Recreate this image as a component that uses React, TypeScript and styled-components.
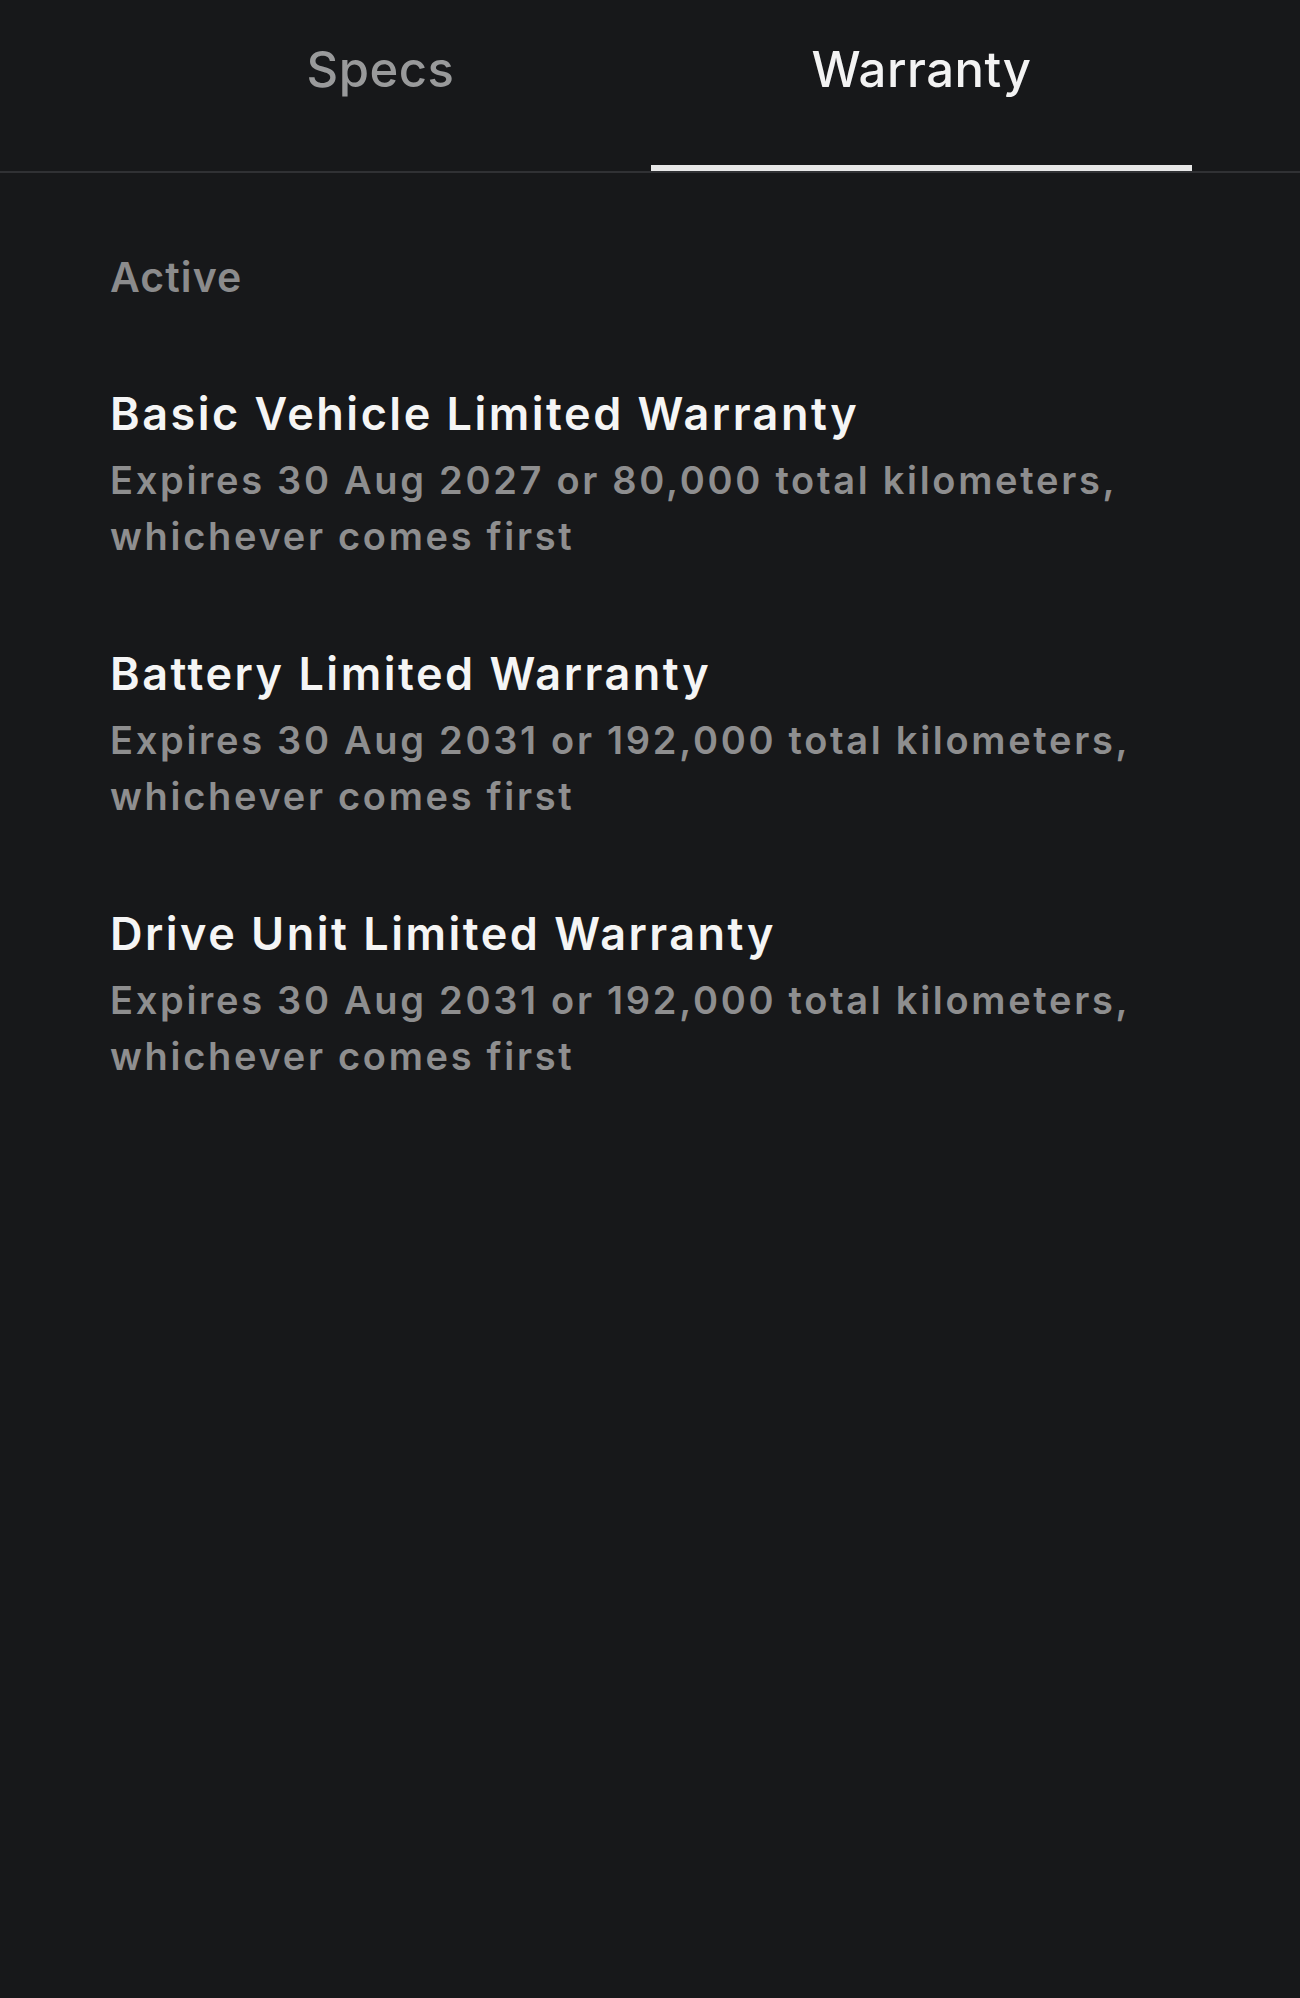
import React, { useState } from 'react';
import styled, { createGlobalStyle } from 'styled-components';

const GlobalStyle = createGlobalStyle`
	html, body {
		margin: 0;
		padding: 0;
		background: #17181a;
	}

	body {
		font-family: Inter, "Noto Sans", "Liberation Sans", sans-serif;
		-webkit-font-smoothing: antialiased;
	}
`;

//#region styles
const Page = styled.div`
	min-height: 1998px;
	background: #17181a;
	color: #f4f4f4;
`;

const TabBar = styled.nav`
	display: flex;
	padding: 0 108px 0 110px;
	border-bottom: 2px solid #303134;
`;

const Tab = styled.button<{ $active: boolean }>`
	flex: 1;
	height: 171px;
	box-sizing: border-box;
	padding: 40px 0 0 0;

	display: flex;
	justify-content: center;
	align-items: flex-start;

	font-family: inherit;
	font-size: 49px;
	font-weight: 500;
	line-height: 60px;
	letter-spacing: 0.5px;

	color: ${props => (props.$active ? '#f3f3f3' : '#999a9b')};
	background: transparent;

	border: none;
	border-bottom: 6px solid ${props => (props.$active ? '#e7e7e7' : 'transparent')};

	cursor: pointer;
`;

const Content = styled.main`
	padding: 79px 110px 0 110px;
`;

const SectionLabel = styled.h3`
	margin: 0 0 84px 0;
	font-size: 41px;
	font-weight: 600;
	line-height: 50px;
	letter-spacing: 1.1px;

	color: #8b8b8c;
`;

const WarrantyList = styled.ul`
	margin: 0;
	padding: 0;
	list-style: none;

	display: flex;
	flex-direction: column;
	gap: 82px;
`;

const WarrantyItem = styled.li`
	display: flex;
	flex-direction: column;
`;

const WarrantyTitle = styled.h2`
	margin: 0 0 10px 0;
	font-size: 45px;
	font-weight: 600;
	line-height: 56px;
	letter-spacing: 2.5px;

	color: #f5f5f5;
`;

const WarrantyTerms = styled.p`
	margin: 0;
	max-width: 1080px;
	font-size: 38px;
	font-weight: 600;
	line-height: 56px;
	letter-spacing: 2.7px;

	color: #8e8e8f;
`;
//#endregion

const warranties = [
	{
		title: 'Basic Vehicle Limited Warranty',
		terms: 'Expires 30 Aug 2027 or 80,000 total kilometers, whichever comes first',
	},
	{
		title: 'Battery Limited Warranty',
		terms: 'Expires 30 Aug 2031 or 192,000 total kilometers, whichever comes first',
	},
	{
		title: 'Drive Unit Limited Warranty',
		terms: 'Expires 30 Aug 2031 or 192,000 total kilometers, whichever comes first',
	},
];

export default function App() {
	const [tab, setTab] = useState<'specs' | 'warranty'>('warranty');

	return (
		<Page>
			<GlobalStyle />

			<TabBar>
				<Tab $active={tab === 'specs'} onClick={() => setTab('specs')}>
					Specs
				</Tab>
				<Tab $active={tab === 'warranty'} onClick={() => setTab('warranty')}>
					Warranty
				</Tab>
			</TabBar>

			<Content>
				<SectionLabel>Active</SectionLabel>

				<WarrantyList>
					{warranties.map(w => (
						<WarrantyItem key={w.title}>
							<WarrantyTitle>{w.title}</WarrantyTitle>
							<WarrantyTerms>{w.terms}</WarrantyTerms>
						</WarrantyItem>
					))}
				</WarrantyList>
			</Content>
		</Page>
	);
}
